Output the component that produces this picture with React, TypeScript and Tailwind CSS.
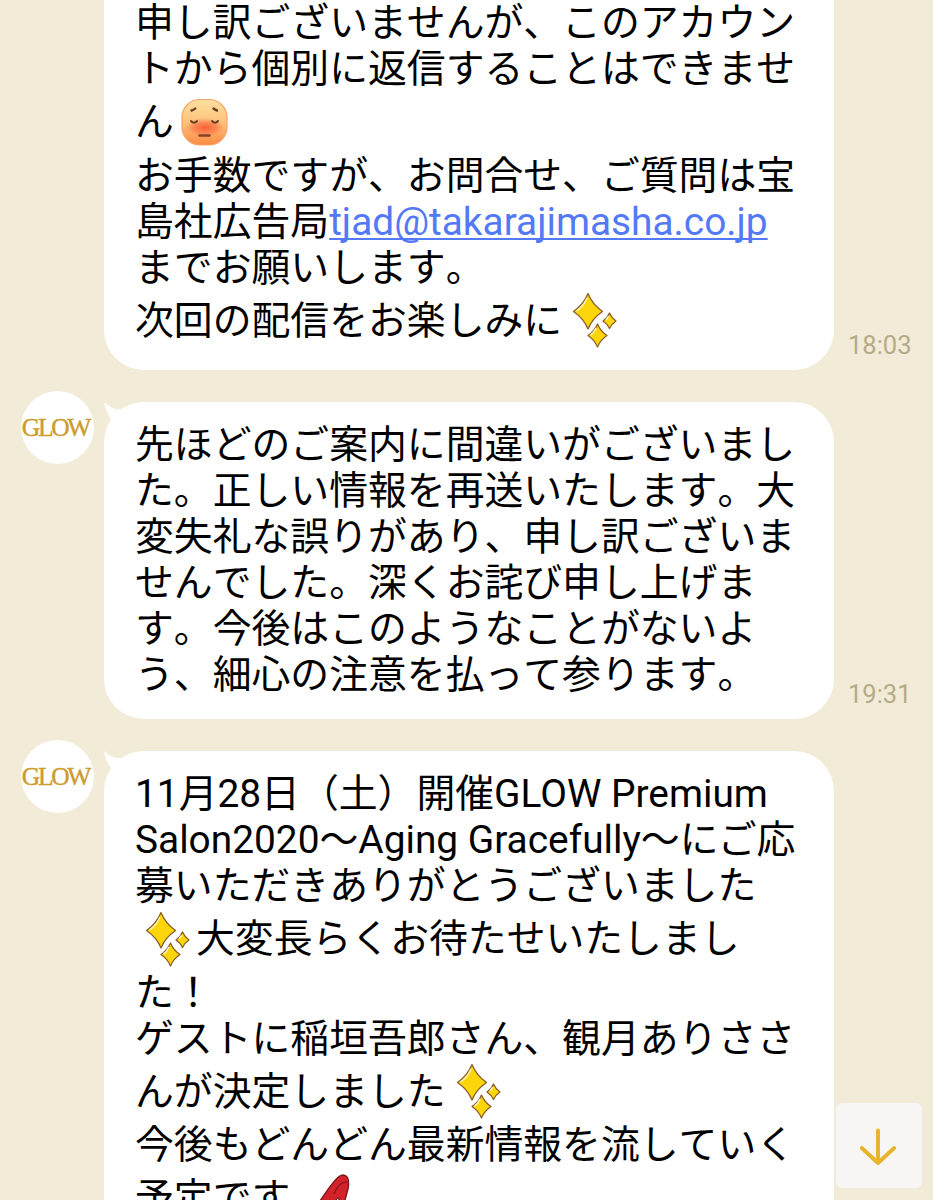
import type { ReactNode } from 'react';

function Sparkles() {
    return (
        <svg className="ml-px mb-[3px] shrink-0 w-[60px] h-[60px]" viewBox="0 0 60 60" stroke="#8a5f2c" strokeWidth="1.3" strokeLinejoin="round">
            <path d="M25 4.500C28 12 33 18 39.500 22.500C33 27 28 32.500 25 40C22 32.500 17 27 10.500 22.500C17 18 22 12 25 4.500Z" fill="#fcd60a" />
            <path d="M46.500 24C48 27.500 50 30 53 32C50 34 48 36 46.500 39.500C45 36 43 34 40 32C43 30 45 27.500 46.500 24Z" fill="#fcd60a" />
            <path d="M34.500 35C36.500 40 39.500 43.500 44 46.500C39.500 49.500 36.500 53 34.500 58C32.500 53 29.500 49.500 25 46.500C29.500 43.500 32.500 40 34.500 35Z" fill="#fcd60a" />
            <path d="M24 9C21.500 15 18 19 13.500 22M33 39C31.500 42.500 30 44.500 27.500 46M45.500 27.500L43 31" fill="none" stroke="#fff6c4" strokeWidth="1.5" />
        </svg>
    );
}

function ShyFace() {
    return (
        <svg className="shrink-0 w-[60px] h-[60px]" viewBox="0 0 60 60">
            <defs>
                <linearGradient id="skin" x1="0" y1="0" x2="0" y2="1">
                    <stop offset="0" stopColor="#fee0a0" />
                    <stop offset="0.55" stopColor="#fdbf78" />
                    <stop offset="1" stopColor="#fb8a42" />
                </linearGradient>
                <radialGradient id="blush">
                    <stop offset="0" stopColor="#fa5630" stopOpacity="0.9" />
                    <stop offset="0.6" stopColor="#fa6840" stopOpacity="0.55" />
                    <stop offset="1" stopColor="#fb8a50" stopOpacity="0" />
                </radialGradient>
            </defs>
            <rect x="8" y="7.500" width="45" height="45.500" rx="18" fill="url(#skin)" stroke="#f6a368" strokeWidth="1.200" />
            <ellipse cx="31" cy="35.500" rx="20" ry="9.500" fill="url(#blush)" />
            <path d="M17.500 18.500Q20 17.800 21.300 16.500M39.500 16.500Q41 17.800 43 18.500" fill="none" stroke="#6b4026" strokeWidth="2.400" strokeLinecap="round" />
            <path d="M17 29Q20 32.500 23 29M38 29Q41 32.500 44 29" fill="none" stroke="#6b4026" strokeWidth="2" strokeLinecap="round" />
            <path d="M25.500 43.500H35.500" stroke="#87422a" strokeWidth="2.600" strokeLinecap="round" />
        </svg>
    );
}

function Heel() {
    return (
        <svg className="ml-[17px] shrink-0 w-[60px] h-[60px]" viewBox="0 0 60 60">
            <path d="M11 36C19 24 26 13 32 8.500Q37 5 40.500 9.500Q42.500 14 41 21L37 36L34 50H31L32 31Q32 28 29 32C25 40 20 46 10 50Z" fill="#d3222a" stroke="#7c1517" strokeWidth="1.300" />
            <path d="M27 26C30 18 34 14 40 14" fill="none" stroke="#8f1719" strokeWidth="1.500" />
        </svg>
    );
}

function Line({ children }: { children: ReactNode }) {
    return <div className="flex h-[46px] items-center whitespace-nowrap">{children}</div>;
}

// rows with an emoji are taller than plain text rows
function EmojiLine({ children }: { children: ReactNode }) {
    return <div className="flex h-[60.5px] items-center whitespace-nowrap">{children}</div>;
}

function Avatar() {
    return (
        <div className="-mt-[11px] flex h-[73px] w-[73px] shrink-0 items-center justify-center rounded-full bg-white">
            <span className="pr-[4px] font-['Liberation_Serif',serif] text-[25.5px] leading-none tracking-[-2.3px] text-[#cb9c2e] [-webkit-text-stroke:0.4px_#cb9c2e]">GLOW</span>
        </div>
    );
}

function Tail() {
    return (
        <svg className="absolute left-0 top-0 h-10 w-10" viewBox="0 0 40 40" fill="#fff">
            <path d="M0 0C5 4.500 10 7.500 17 7.500L26 4V24H12L7 17C4 12.500 1 7 0 0Z" />
        </svg>
    );
}

function Time({ children }: { children: ReactNode }) {
    return <div className="ml-[14px] self-end pb-[11px] text-[25.5px] leading-[28px] text-[#b5ab88]">{children}</div>;
}

export default function App() {
    return (
        <div className="relative flex h-[1200px] w-[933px] flex-col gap-8 overflow-hidden bg-[#f2ebd7] pl-[21px] font-[Roboto,'Noto_Sans_CJK_JP',sans-serif] text-[38.83px] leading-[46px] text-black [font-kerning:none]">
            <div className="flex shrink-0 pl-[83px]">
                <div className="w-[730px] rounded-b-[40px] bg-white pb-[19px] pl-[31px]">
                    <Line>申し訳ございませんが、このアカウン</Line>
                    <Line>トから個別に返信することはできませ</Line>
                    <EmojiLine>ん<ShyFace /></EmojiLine>
                    <Line>お手数ですが、お問合せ、ご質問は宝</Line>
                    <Line>
                        島社広告局
                        <a className="text-[#5479f7] underline decoration-2 underline-offset-[3px] [font-kerning:normal] [text-decoration-skip-ink:none]">tjad@takarajimasha.co.jp</a>
                    </Line>
                    <Line>までお願いします。</Line>
                    <EmojiLine>次回の配信をお楽しみに<Sparkles /></EmojiLine>
                </div>
                <Time>18:03</Time>
            </div>

            <div className="flex shrink-0">
                <Avatar />
                <div className="relative ml-[10px] w-[730px] rounded-[40px] bg-white pt-5 pb-[21px] pl-[31px]">
                    <Tail />
                    <Line>先ほどのご案内に間違いがございまし</Line>
                    <Line>た。正しい情報を再送いたします。大</Line>
                    <Line>変失礼な誤りがあり、申し訳ございま</Line>
                    <Line>せんでした。深くお詫び申し上げま</Line>
                    <Line>す。今後はこのようなことがないよ</Line>
                    <Line>う、細心の注意を払って参ります。</Line>
                </div>
                <Time>19:31</Time>
            </div>

            <div className="flex shrink-0">
                <Avatar />
                <div className="relative ml-[10px] w-[730px] rounded-t-[40px] bg-white pt-5 pl-[31px]">
                    <Tail />
                    <Line><span className="[font-kerning:normal]">11月28日（土）開催GLOW Premium</span></Line>
                    <Line><span className="[font-kerning:normal]">Salon2020〜Aging Gracefully〜にご応</span></Line>
                    <Line>募いただきありがとうございました</Line>
                    <EmojiLine><Sparkles />大変長らくお待たせいたしまし</EmojiLine>
                    <Line>た！</Line>
                    <Line>ゲストに稲垣吾郎さん、観月ありささ</Line>
                    <EmojiLine>んが決定しました<Sparkles /></EmojiLine>
                    <Line>今後もどんどん最新情報を流していく</Line>
                    <EmojiLine>予定です<Heel /></EmojiLine>
                </div>
            </div>

            <button className="absolute left-[836px] top-[1103px] flex h-[85px] w-[86px] items-center justify-center rounded-md bg-[#f7f6f4]">
                <svg className="h-10 w-10" viewBox="0 0 40 40" fill="none" stroke="#e6b52c" strokeWidth="3.900" strokeLinecap="round" strokeLinejoin="round">
                    <path d="M19 4.500V37M2.800 22L19 37L35.200 22" />
                </svg>
            </button>
        </div>
    );
}
